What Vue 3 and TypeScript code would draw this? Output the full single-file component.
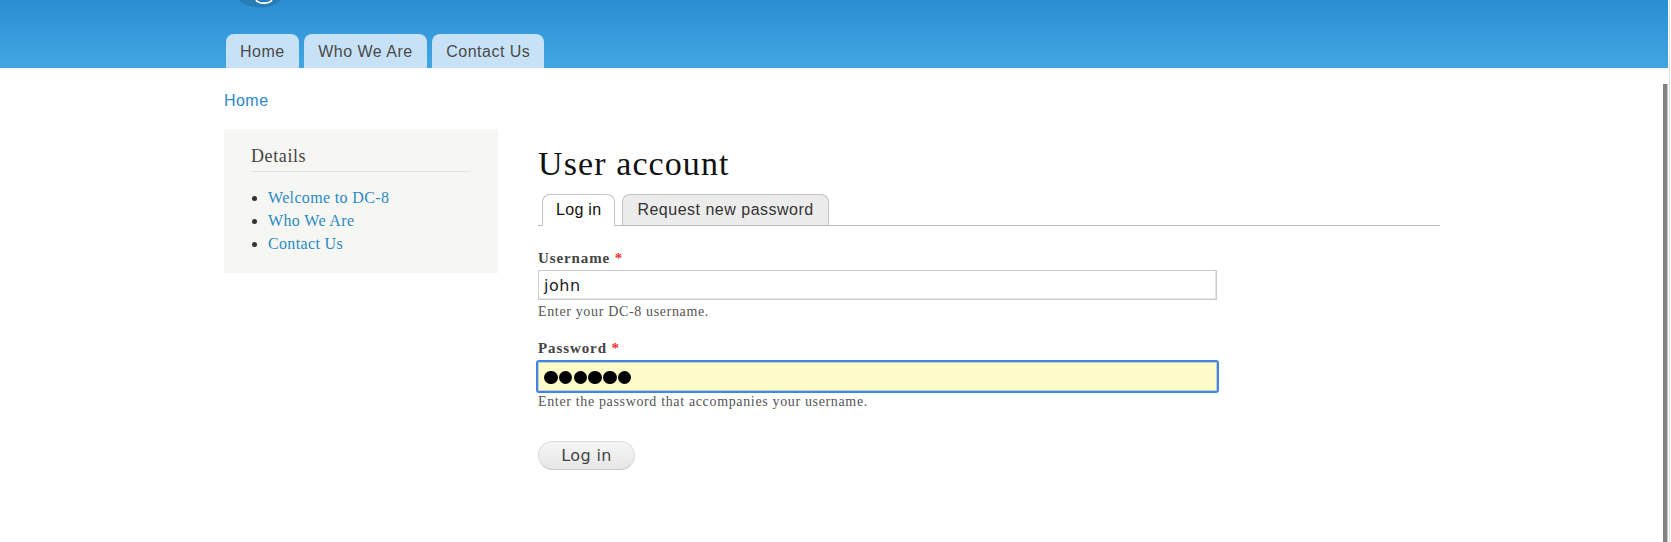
<script setup lang="ts">
const navTabs: string[] = ['Home', 'Who We Are', 'Contact Us']
const sideLinks: string[] = ['Welcome to DC-8', 'Who We Are', 'Contact Us']
</script>

<template>
  <div class="page">
    <header class="header">
      <svg class="logo" width="60" height="10" viewBox="0 0 60 10">
        <ellipse cx="30" cy="-13" rx="28" ry="20.5" fill="#2a7cb6" />
        <path d="M26 0 Q28 3.2 34 3.1 Q40 3 42 0" fill="none" stroke="#fff" stroke-width="1.6" />
      </svg>
      <nav class="nav">
        <a v-for="t in navTabs" :key="t" class="nav-tab">{{ t }}</a>
      </nav>
    </header>
    <div class="crumb">Home</div>
    <div class="layout">
      <aside class="side">
        <h2 class="side-title">Details</h2>
        <ul class="side-list">
          <li v-for="l in sideLinks" :key="l">{{ l }}</li>
        </ul>
      </aside>
      <main class="main">
        <h1 class="title">User account</h1>
        <div class="tabs">
          <span class="tab active">Log in</span>
          <span class="tab">Request new password</span>
        </div>
        <div class="field first">
          <label class="label">Username <span class="req">*</span></label>
          <div class="input">john</div>
          <div class="hint">Enter your DC-8 username.</div>
        </div>
        <div class="field second">
          <label class="label">Password <span class="req">*</span></label>
          <div class="input focused"><span v-for="n in 6" :key="n" class="dot"></span></div>
          <div class="hint tight">Enter the password that accompanies your username.</div>
        </div>
        <button class="btn" type="button">Log in</button>
      </main>
    </div>
    <div class="scroll-track"></div>
    <div class="scroll-thumb"></div>
  </div>
</template>

<style scoped>
.page {
  position: relative;
  width: 1671px;
  height: 542px;
  overflow: hidden;
  background: #fff;
}
.header {
  position: relative;
  width: 1668px;
  height: 68px;
  box-sizing: border-box;
  padding: 34px 0 0 226px;
  background: linear-gradient(#2a8fd2, #42a6e3);
}
.logo {
  position: absolute;
  left: 230px;
  top: 0;
}
.nav {
  display: flex;
  gap: 5.5px;
}
.nav-tab {
  height: 34px;
  box-sizing: border-box;
  padding: 9px 14px 0;
  border-radius: 8px 8px 0 0;
  background: #c7e2f6;
  color: #4a4a4a;
  font: 16px/18px "Liberation Sans", sans-serif;
  letter-spacing: 0.5px;
}
.crumb {
  margin: 23px 0 0 224px;
  height: 19px;
  color: #2b8ac6;
  font: 16px/19px "Liberation Sans", sans-serif;
  letter-spacing: 0.45px;
}
.layout {
  display: flex;
  margin: 19px 0 0 224px;
  gap: 40px;
}
.side {
  width: 274px;
  height: 144px;
  box-sizing: border-box;
  padding: 17px 27px 0;
  background: #f6f6f2;
}
.side-title {
  margin: 0;
  padding-bottom: 5px;
  border-bottom: 1px solid #e2e2e0;
  color: #444;
  font: 400 18px/20px "Liberation Serif", serif;
  letter-spacing: 0.6px;
}
.side-list {
  margin: 14px 0 0;
  padding: 0 0 0 17px;
  color: #2b8ac6;
  font: 16px/23px "Liberation Serif", serif;
  letter-spacing: 0.35px;
}
.side-list li::marker {
  color: #333;
}
.main {
  width: 902px;
}
.title {
  margin: 15px 0 0;
  color: #111;
  font: 400 34px/40px "Liberation Serif", serif;
  letter-spacing: 1.1px;
}
.tabs {
  display: flex;
  gap: 7px;
  height: 31px;
  margin-top: 10px;
  padding-left: 4px;
  border-bottom: 1px solid #bbb;
}
.tab {
  height: 31px;
  box-sizing: border-box;
  padding: 6px 14px 0;
  border: 1px solid #c4c4c4;
  border-bottom: 0;
  border-radius: 8px 8px 0 0;
  background: #ececec;
  color: #333;
  font: 16px/18px "Liberation Sans", sans-serif;
  letter-spacing: 0.5px;
}
.tab.active {
  height: 32px;
  padding: 6px 13px 0;
  background: #fff;
  color: #111;
  letter-spacing: 0.3px;
}
.field.first {
  margin-top: 24px;
}
.field.second {
  margin-top: 20px;
}
.label {
  display: block;
  color: #444;
  font: 700 15px/17px "Liberation Serif", serif;
  letter-spacing: 0.9px;
}
.req {
  color: #e33;
}
.input {
  display: flex;
  align-items: center;
  width: 679px;
  height: 30px;
  margin-top: 3px;
  box-sizing: border-box;
  padding: 1px 0 0 5px;
  border: 1px solid #ccc;
  box-shadow: inset -1px -1px 0 #e4e4e4;
  color: #222;
  font: 16px/20px "DejaVu Sans", sans-serif;
  letter-spacing: 0.5px;
}
.input.focused {
  height: 33px;
  width: 683px;
  margin-left: -2px;
  padding: 2px 0 0 6px;
  gap: 1.3px;
  border: 2px solid #3b86e6;
  border-radius: 3px;
  background: #fffbc8;
  box-shadow: inset 0 0 0 1px #ccc;
}
.dot {
  width: 13.5px;
  height: 13.5px;
  border-radius: 50%;
  background: #000;
}
.hint {
  margin-top: 3px;
  color: #555;
  font: 14px/17px "Liberation Serif", serif;
  letter-spacing: 0.65px;
}
.hint.tight {
  margin-top: 0;
}
.btn {
  display: block;
  width: 97px;
  height: 29px;
  margin-top: 31px;
  padding: 0;
  border: 1px solid #dcdcdc;
  border-bottom-color: #c8c8c8;
  border-radius: 15px;
  background: linear-gradient(#f6f6f6, #e6e6e6);
  color: #444;
  font: 16px/18px "DejaVu Sans", sans-serif;
  letter-spacing: 0.4px;
}
.scroll-track {
  position: absolute;
  right: 1px;
  top: 0;
  width: 1px;
  height: 542px;
  background: #e4e4e4;
}
.scroll-thumb {
  position: absolute;
  left: 1663px;
  top: 84px;
  width: 4px;
  height: 458px;
  background: #7f827f;
  border-right: 1px solid #c9c9c9;
}
</style>
